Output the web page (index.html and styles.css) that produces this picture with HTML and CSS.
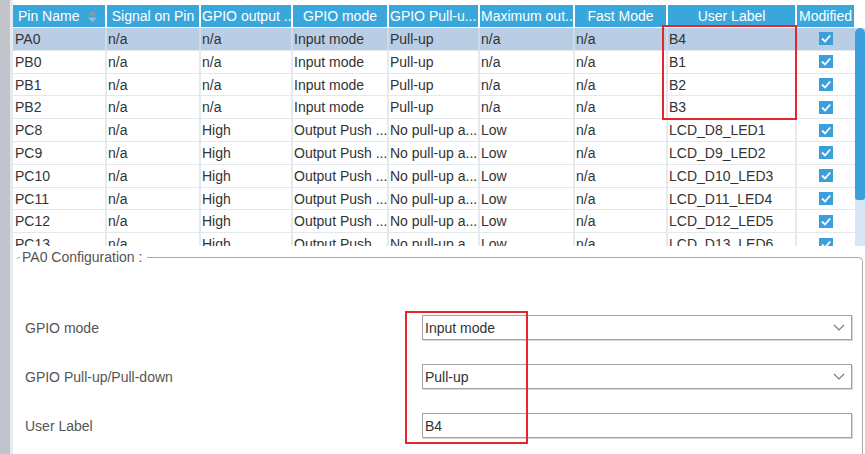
FILE: index.html
```html
<!DOCTYPE html>
<html>
<head>
<meta charset="utf-8">
<link rel="stylesheet" href="styles.css">
</head>
<body>
<div class="app">
  <div class="gutter"></div>
  <div class="main">
    <div class="table-area">
      <div class="grid">
        <div class="head">
          <div class="hc hc-sort"><span>Pin Name</span>
            <svg class="sort" width="9" height="11" viewBox="0 0 9 11"><path d="M4.5 0 L9 4.5 L0 4.5 Z" fill="#8f9aa6"/><path d="M0 6.5 L9 6.5 L4.5 11 Z" fill="#a9b4bf"/></svg>
          </div>
          <div class="hc">Signal on Pin</div>
          <div class="hc left">GPIO output ...</div>
          <div class="hc">GPIO mode</div>
          <div class="hc left">GPIO Pull-u...</div>
          <div class="hc left">Maximum out...</div>
          <div class="hc">Fast Mode</div>
          <div class="hc">User Label</div>
          <div class="hc">Modified</div>
        </div>
        <div class="body">
          <div class="row sel"><div class="c first">PA0</div><div class="c">n/a</div><div class="c">n/a</div><div class="c">Input mode</div><div class="c">Pull-up</div><div class="c">n/a</div><div class="c">n/a</div><div class="c">B4</div><div class="c chk"><svg width="14" height="13" viewBox="0 0 14 13"><rect width="14" height="13" fill="#3a9fdc"/><path d="M3 6.5 L6 9.5 L11.2 3.5" stroke="#fff" stroke-width="1.8" fill="none"/></svg></div></div>
          <div class="row"><div class="c first">PB0</div><div class="c">n/a</div><div class="c">n/a</div><div class="c">Input mode</div><div class="c">Pull-up</div><div class="c">n/a</div><div class="c">n/a</div><div class="c">B1</div><div class="c chk"><svg width="14" height="13" viewBox="0 0 14 13"><rect width="14" height="13" fill="#3a9fdc"/><path d="M3 6.5 L6 9.5 L11.2 3.5" stroke="#fff" stroke-width="1.8" fill="none"/></svg></div></div>
          <div class="row"><div class="c first">PB1</div><div class="c">n/a</div><div class="c">n/a</div><div class="c">Input mode</div><div class="c">Pull-up</div><div class="c">n/a</div><div class="c">n/a</div><div class="c">B2</div><div class="c chk"><svg width="14" height="13" viewBox="0 0 14 13"><rect width="14" height="13" fill="#3a9fdc"/><path d="M3 6.5 L6 9.5 L11.2 3.5" stroke="#fff" stroke-width="1.8" fill="none"/></svg></div></div>
          <div class="row"><div class="c first">PB2</div><div class="c">n/a</div><div class="c">n/a</div><div class="c">Input mode</div><div class="c">Pull-up</div><div class="c">n/a</div><div class="c">n/a</div><div class="c">B3</div><div class="c chk"><svg width="14" height="13" viewBox="0 0 14 13"><rect width="14" height="13" fill="#3a9fdc"/><path d="M3 6.5 L6 9.5 L11.2 3.5" stroke="#fff" stroke-width="1.8" fill="none"/></svg></div></div>
          <div class="row"><div class="c first">PC8</div><div class="c">n/a</div><div class="c">High</div><div class="c">Output Push ...</div><div class="c">No pull-up a...</div><div class="c">Low</div><div class="c">n/a</div><div class="c">LCD_D8_LED1</div><div class="c chk"><svg width="14" height="13" viewBox="0 0 14 13"><rect width="14" height="13" fill="#3a9fdc"/><path d="M3 6.5 L6 9.5 L11.2 3.5" stroke="#fff" stroke-width="1.8" fill="none"/></svg></div></div>
          <div class="row"><div class="c first">PC9</div><div class="c">n/a</div><div class="c">High</div><div class="c">Output Push ...</div><div class="c">No pull-up a...</div><div class="c">Low</div><div class="c">n/a</div><div class="c">LCD_D9_LED2</div><div class="c chk"><svg width="14" height="13" viewBox="0 0 14 13"><rect width="14" height="13" fill="#3a9fdc"/><path d="M3 6.5 L6 9.5 L11.2 3.5" stroke="#fff" stroke-width="1.8" fill="none"/></svg></div></div>
          <div class="row"><div class="c first">PC10</div><div class="c">n/a</div><div class="c">High</div><div class="c">Output Push ...</div><div class="c">No pull-up a...</div><div class="c">Low</div><div class="c">n/a</div><div class="c">LCD_D10_LED3</div><div class="c chk"><svg width="14" height="13" viewBox="0 0 14 13"><rect width="14" height="13" fill="#3a9fdc"/><path d="M3 6.5 L6 9.5 L11.2 3.5" stroke="#fff" stroke-width="1.8" fill="none"/></svg></div></div>
          <div class="row"><div class="c first">PC11</div><div class="c">n/a</div><div class="c">High</div><div class="c">Output Push ...</div><div class="c">No pull-up a...</div><div class="c">Low</div><div class="c">n/a</div><div class="c">LCD_D11_LED4</div><div class="c chk"><svg width="14" height="13" viewBox="0 0 14 13"><rect width="14" height="13" fill="#3a9fdc"/><path d="M3 6.5 L6 9.5 L11.2 3.5" stroke="#fff" stroke-width="1.8" fill="none"/></svg></div></div>
          <div class="row"><div class="c first">PC12</div><div class="c">n/a</div><div class="c">High</div><div class="c">Output Push ...</div><div class="c">No pull-up a...</div><div class="c">Low</div><div class="c">n/a</div><div class="c">LCD_D12_LED5</div><div class="c chk"><svg width="14" height="13" viewBox="0 0 14 13"><rect width="14" height="13" fill="#3a9fdc"/><path d="M3 6.5 L6 9.5 L11.2 3.5" stroke="#fff" stroke-width="1.8" fill="none"/></svg></div></div>
          <div class="row"><div class="c first">PC13</div><div class="c">n/a</div><div class="c">High</div><div class="c">Output Push ...</div><div class="c">No pull-up a...</div><div class="c">Low</div><div class="c">n/a</div><div class="c">LCD_D13_LED6</div><div class="c chk"><svg width="14" height="13" viewBox="0 0 14 13"><rect width="14" height="13" fill="#3a9fdc"/><path d="M3 6.5 L6 9.5 L11.2 3.5" stroke="#fff" stroke-width="1.8" fill="none"/></svg></div></div>
        </div>
      </div>
      <div class="scroll"><div class="thumb"></div></div>
    </div>
    <fieldset class="config">
      <legend>PA0 Configuration :</legend>
      <div class="form">
        <div class="lbl">GPIO mode</div>
        <div class="ctl"><span>Input mode</span><svg width="12" height="7" viewBox="0 0 12 7"><path d="M1 1 L6 6 L11 1" stroke="#7a7a7a" stroke-width="1.2" fill="none"/></svg></div>
        <div class="lbl">GPIO Pull-up/Pull-down</div>
        <div class="ctl"><span>Pull-up</span><svg width="12" height="7" viewBox="0 0 12 7"><path d="M1 1 L6 6 L11 1" stroke="#7a7a7a" stroke-width="1.2" fill="none"/></svg></div>
        <div class="lbl">User Label</div>
        <div class="ctl"><span>B4</span></div>
      </div>
    </fieldset>
  </div>
</div>
<div class="mark mark-label"></div>
<div class="mark mark-form"></div>
</body>
</html>
```

FILE: styles.css
```css
html, body {
  margin: 0;
  padding: 0;
}
body {
  font-family: "Liberation Sans", Arial, sans-serif;
  font-size: 14px;
  color: #333;
  background: #fff;
  overflow: hidden;
}
.app {
  display: flex;
  height: 454px;
}
.gutter {
  width: 10px;
  background: #bfc5ca;
  border-right: 3px solid #e7ebee;
  flex: none;
}
.main {
  flex: 1;
  display: flex;
  flex-direction: column;
  min-width: 0;
}
.table-area {
  display: flex;
  height: 246px;
  padding-top: 5px;
  box-sizing: border-box;
  flex: none;
}
.grid {
  width: 842px;
  overflow: hidden;
  flex: none;
}
.head, .row {
  display: grid;
  grid-template-columns: 94px 94px 92px 96px 91px 95px 93px 129px 58px;
}
.head {
  height: 22px;
  margin-bottom: 1px;
}
.hc {
  background: #3aa7dc;
  color: #fff;
  line-height: 22px;
  text-align: center;
  border-right: 2px solid #fff;
  white-space: nowrap;
  overflow: hidden;
}
.hc.left {
  text-align: left;
  padding-left: 1px;
}
.hc:last-child {
  border-right-width: 1px;
}
.hc-sort {
  display: flex;
  align-items: center;
  justify-content: space-between;
  padding: 0 8px 0 5px;
}
.body {
  height: 218px;
  overflow: hidden;
}
.row {
  height: 22.8px;
  box-sizing: border-box;
  border-bottom: 1px solid #e3e8ed;
}
.c {
  line-height: 22px;
  padding-left: 1px;
  border-right: 2px solid #e6eaee;
  white-space: nowrap;
  overflow: hidden;
}
.c.first {
  padding-left: 2px;
}
.c.chk {
  border-right: none;
  display: flex;
  align-items: center;
  justify-content: center;
  padding-left: 0;
}
.row.sel {
  background: #b9cee4;
}
.row.sel .c {
  border-right-color: #cfdbe8;
}
.scroll {
  width: 10px;
  margin-top: 23px;
  background: #d8e7f5;
  flex: none;
}
.thumb {
  height: 172px;
  background: #3a9fdc;
  border-radius: 5px 5px 3px 3px;
}
.config {
  flex: 1;
  margin: 3px 2px 0 2px;
  padding: 0 10px 0 9px;
  border: 1px solid #a9a9a9;
  border-left-color: transparent;
  border-bottom: none;
  border-radius: 5px 5px 0 0;
  min-width: 0;
}
.config legend {
  margin-left: -5px;
  padding: 0 5px 0 2px;
  color: #555;
  font-size: 14px;
  line-height: 16px;
}
.form {
  display: grid;
  grid-template-columns: 397px 1fr;
  grid-auto-rows: 25px;
  row-gap: 24px;
  align-items: center;
  padding-top: 50px;
}
.lbl {
  color: #555;
}
.ctl {
  height: 25px;
  box-sizing: border-box;
  border: 1px solid #a3a3a3;
  box-shadow: 1px 1px 0 #d6d6d6;
  display: flex;
  align-items: center;
  justify-content: space-between;
  padding: 0 6px 0 2px;
  background: #fff;
  color: #333;
}
.mark {
  position: absolute;
  border: 2px solid #e5262c;
  box-sizing: border-box;
}
.mark-label {
  left: 662px;
  top: 25px;
  width: 135px;
  height: 95px;
}
.mark-form {
  left: 405px;
  top: 311px;
  width: 123px;
  height: 133px;
}
```
